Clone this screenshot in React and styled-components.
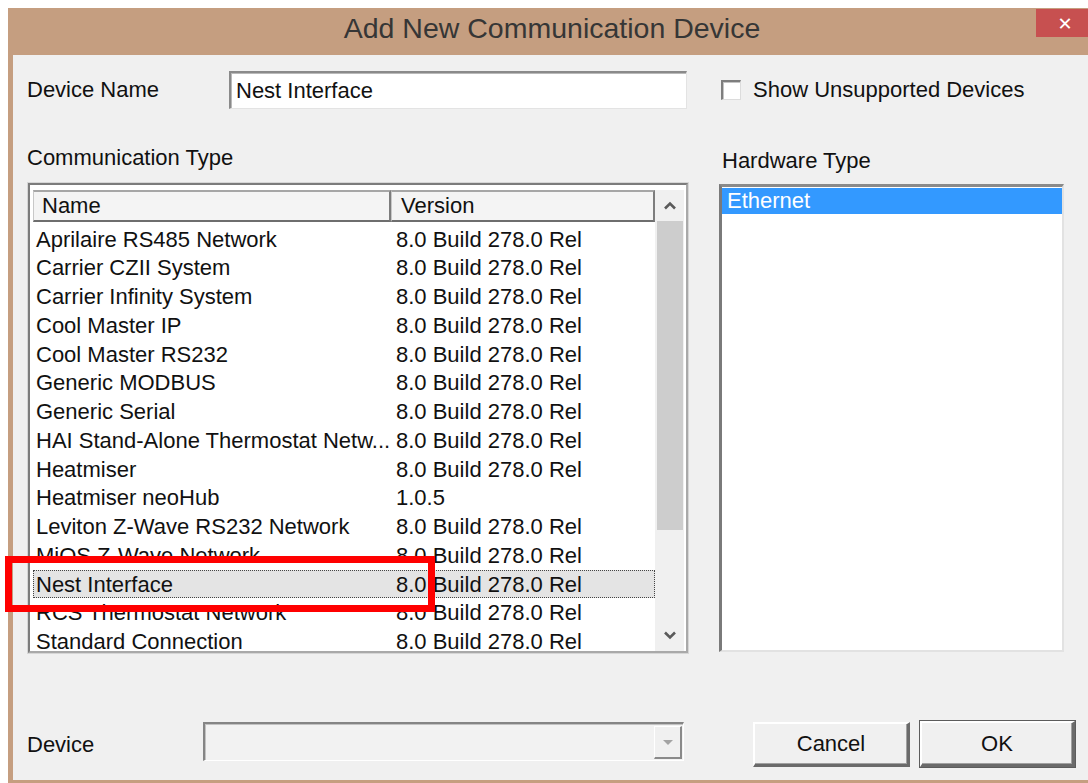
import React from "react";
import styled, { createGlobalStyle } from "styled-components";

const GlobalStyle = createGlobalStyle`
  html, body {
    margin: 0;
    padding: 0;
    background: #ffffff;
    overflow: hidden;
  }
  * { box-sizing: border-box; }
  body {
    font-family: "Liberation Sans", Arial, sans-serif;
  }
`;

const Page = styled.div`
  position: relative;
  width: 1088px;
  height: 783px;
  overflow: hidden;
  padding: 8px 0 0 8px;
`;

const Window = styled.div`
  width: 1088px;
  height: 790px;
  background: #c59e80;
  display: flex;
  flex-direction: column;
`;

const TitleBar = styled.div`
  position: relative;
  height: 47px;
  display: flex;
  justify-content: center;
  align-items: flex-start;
`;

const Title = styled.div`
  font-size: 28.5px;
  line-height: 40px;
  color: #363636;
  font-family: "Liberation Sans", Arial, sans-serif;
`;

const CloseButton = styled.div`
  position: absolute;
  top: 1px;
  right: 2px;
  width: 58px;
  height: 28px;
  background: #c75050;
  color: #ffffff;
  display: flex;
  align-items: center;
  justify-content: center;
  font-size: 18px;
  font-weight: bold;
  font-family: "DejaVu Sans", sans-serif;
`;

const Client = styled.div`
  margin: 0 5px;
  height: 725px;
  background: #f0f0f0;
  padding: 16px 0 0 14px;
  display: flex;
  flex-direction: column;
  color: #111111;
  font-size: 22px;
`;

const TopRow = styled.div`
  display: flex;
  align-items: center;
  height: 38px;
`;

const FieldLabel = styled.div`
  width: ${(p) => p.$width}px;
  flex: none;
  line-height: 24px;
  margin-top: ${(p) => p.$top || 0}px;
  white-space: nowrap;
`;

const TextBox = styled.div`
  width: 458px;
  height: 38px;
  background: #ffffff;
  border-style: solid;
  border-width: 2px 1px 1px 2px;
  border-color: #8a8a8a #e3e3e3 #e3e3e3 #8a8a8a;
  box-shadow: inset 1px 1px 0 #b9b9b9;
  padding: 4px 0 0 5px;
  line-height: 27px;
  white-space: nowrap;
`;

const CheckRow = styled.label`
  display: flex;
  align-items: center;
  margin-left: 34px;
  gap: 12px;
  white-space: nowrap;
`;

const CheckBox = styled.span`
  width: 20px;
  height: 20px;
  background: #ffffff;
  border-style: solid;
  border-width: 2px 1px 1px 2px;
  border-color: #7e7e7e #dcdcdc #dcdcdc #7e7e7e;
  box-shadow: inset 1px 1px 0 #c4c4c4;
`;

const Middle = styled.div`
  display: flex;
  margin-top: 37px;
`;

const Column = styled.div`
  display: flex;
  flex-direction: column;
  width: ${(p) => p.$width}px;
  margin-left: ${(p) => p.$left || 0}px;
`;

const SectionLabel = styled.div`
  line-height: 24px;
  margin-top: ${(p) => p.$top || 0}px;
  padding-left: ${(p) => p.$pad || 0}px;
  white-space: nowrap;
`;

const ListFrame = styled.div`
  margin: 13px 0 0 1px;
  width: 660px;
  height: 470px;
  background: #ffffff;
  border: 2px solid;
  border-color: #7c7c7c #a9a9a9 #a9a9a9 #7c7c7c;
  box-shadow: 0 0 0 1px #d6d6d6;
  padding: 5px 2px 0 3px;
  display: flex;
  overflow: hidden;
`;

const ListMain = styled.div`
  flex: 1;
  display: flex;
  flex-direction: column;
  min-width: 0;
`;

const Header = styled.div`
  display: grid;
  grid-template-columns: 358px 1fr;
  height: 32px;
  flex: none;
  background: #f4f4f4;
`;

const HeaderCell = styled.div`
  border-style: solid;
  border-width: 2px 2px 2px 1px;
  border-color: #a6a6a6 #7d7d7d #6e6e6e #c8c8c8;
  padding-left: ${(p) => p.$pad}px;
  line-height: 27px;
  white-space: nowrap;
`;

const Rows = styled.div`
  height: 428px;
  padding-top: 2.5px;
  overflow: hidden;
`;

const Row = styled.div`
  display: grid;
  grid-template-columns: 358px 1fr;
  height: 28.75px;
  line-height: 29px;
  white-space: nowrap;
  background: ${(p) => (p.$focused ? "#e4e4e4" : "transparent")};
  outline: ${(p) => (p.$focused ? "1px dotted #444" : "none")};
  outline-offset: -1px;
`;

const Cell = styled.div`
  padding-left: ${(p) => p.$pad}px;
  overflow: hidden;
`;

const ScrollBar = styled.div`
  width: 29px;
  height: 100%;
  background: #f0f0f0;
  display: flex;
  flex-direction: column;
  padding: 0 1px 0 2px;
`;

const ScrollButton = styled.div`
  height: 31px;
  display: flex;
  align-items: center;
  justify-content: center;
  flex: none;
`;

const Thumb = styled.div`
  height: 309px;
  background: #cdcdcd;
  flex: none;
`;

const Track = styled.div`
  flex: 1;
`;

const HardwareList = styled.div`
  margin-top: 11px;
  height: 468px;
  background: #ffffff;
  border-style: solid;
  border-width: 3px 2px 2px 3px;
  border-color: #8a8a8a #e2e2e2 #e2e2e2 #7a7a7a;
  padding: 1px 0 0 0;
`;

const HardwareItem = styled.div`
  height: 26px;
  line-height: 26px;
  background: #3399ff;
  color: #ffffff;
  padding-left: 5px;
`;

const BottomRow = styled.div`
  display: flex;
  align-items: flex-start;
  margin-top: 68px;
`;

const ComboBox = styled.div`
  margin-top: 1px;
  width: 481px;
  height: 39px;
  background: #f2f2f2;
  border-style: solid;
  border-width: 2px 1px 1px 2px;
  border-color: #858585 #ffffff #ffffff #858585;
  box-shadow: inset 1px 1px 0 #c2c2c2;
  display: flex;
  justify-content: flex-end;
  padding: 2px 1px 1px 0;
`;

const DropButton = styled.div`
  width: 28px;
  height: 33px;
  background: #f0f0f0;
  border-style: solid;
  border-width: 1px 2px 2px 1px;
  border-color: #ffffff #8a8a8a #8a8a8a #ffffff;
  display: flex;
  align-items: center;
  justify-content: center;
`;

const PushButton = styled.div`
  margin-top: ${(p) => (p.$default ? 0 : 1)}px;
  margin-left: ${(p) => p.$left}px;
  width: ${(p) => p.$width}px;
  height: ${(p) => (p.$default ? 46 : 45)}px;
  background: #f0f0f0;
  border-style: solid;
  border-width: 2px 3px 3px 2px;
  border-color: #ffffff #6a6a6a #6a6a6a #ffffff;
  box-shadow: ${(p) => (p.$default ? "0 0 0 1px #5c5c5c, inset -1px -1px 0 #a0a0a0" : "inset -1px -1px 0 #a0a0a0")};
  display: flex;
  align-items: center;
  justify-content: center;
  line-height: 24px;
`;

const Highlight = styled.div`
  position: absolute;
  left: 5px;
  top: 556px;
  width: 430px;
  height: 56px;
  border: 7px solid #ff0000;
  pointer-events: none;
`;

const devices = [
  ["Aprilaire RS485 Network", "8.0 Build 278.0 Rel"],
  ["Carrier CZII System", "8.0 Build 278.0 Rel"],
  ["Carrier Infinity System", "8.0 Build 278.0 Rel"],
  ["Cool Master IP", "8.0 Build 278.0 Rel"],
  ["Cool Master RS232", "8.0 Build 278.0 Rel"],
  ["Generic MODBUS", "8.0 Build 278.0 Rel"],
  ["Generic Serial", "8.0 Build 278.0 Rel"],
  ["HAI Stand-Alone Thermostat Netw...", "8.0 Build 278.0 Rel"],
  ["Heatmiser", "8.0 Build 278.0 Rel"],
  ["Heatmiser neoHub", "1.0.5"],
  ["Leviton Z-Wave RS232 Network", "8.0 Build 278.0 Rel"],
  ["MiOS Z-Wave Network", "8.0 Build 278.0 Rel"],
  ["Nest Interface", "8.0 Build 278.0 Rel"],
  ["RCS Thermostat Network", "8.0 Build 278.0 Rel"],
  ["Standard Connection", "8.0 Build 278.0 Rel"],
];

const Chevron = ({ up }) => (
  <svg width="14" height="9" viewBox="0 0 14 9">
    <polyline
      points={up ? "2,7.5 7,2.5 12,7.5" : "2,1.5 7,6.5 12,1.5"}
      fill="none"
      stroke="#5a5a5a"
      strokeWidth="2.6"
    />
  </svg>
);

export default function App() {
  return (
    <>
      <GlobalStyle />
      <Page>
        <Window>
          <TitleBar>
            <Title>Add New Communication Device</Title>
            <CloseButton>✕</CloseButton>
          </TitleBar>
          <Client>
            <TopRow>
              <FieldLabel $width={202}>Device Name</FieldLabel>
              <TextBox>Nest Interface</TextBox>
              <CheckRow>
                <CheckBox />
                Show Unsupported Devices
              </CheckRow>
            </TopRow>

            <Middle>
              <Column $width={661}>
                <SectionLabel>Communication Type</SectionLabel>
                <ListFrame>
                  <ListMain>
                    <Header>
                      <HeaderCell $pad={8}>Name</HeaderCell>
                      <HeaderCell $pad={9}>Version</HeaderCell>
                    </Header>
                    <Rows>
                      {devices.map(([name, version]) => (
                        <Row key={name} $focused={name === "Nest Interface"}>
                          <Cell $pad={3}>{name}</Cell>
                          <Cell $pad={5}>{version}</Cell>
                        </Row>
                      ))}
                    </Rows>
                  </ListMain>
                  <ScrollBar>
                    <ScrollButton>
                      <Chevron up />
                    </ScrollButton>
                    <Thumb />
                    <Track />
                    <ScrollButton>
                      <Chevron />
                    </ScrollButton>
                  </ScrollBar>
                </ListFrame>
              </Column>

              <Column $width={345} $left={31}>
                <SectionLabel $top={3} $pad={3}>Hardware Type</SectionLabel>
                <HardwareList>
                  <HardwareItem>Ethernet</HardwareItem>
                </HardwareList>
              </Column>
            </Middle>

            <BottomRow>
              <FieldLabel $width={176} $top={12}>Device</FieldLabel>
              <ComboBox>
                <DropButton>
                  <svg width="12" height="7" viewBox="0 0 12 7">
                    <polygon points="1,1 11,1 6,6" fill="#a3a3a3" />
                  </svg>
                </DropButton>
              </ComboBox>
              <PushButton $left={69} $width={157}>Cancel</PushButton>
              <PushButton $left={10} $width={155} $default>OK</PushButton>
            </BottomRow>
          </Client>
        </Window>
        <Highlight />
      </Page>
    </>
  );
}
